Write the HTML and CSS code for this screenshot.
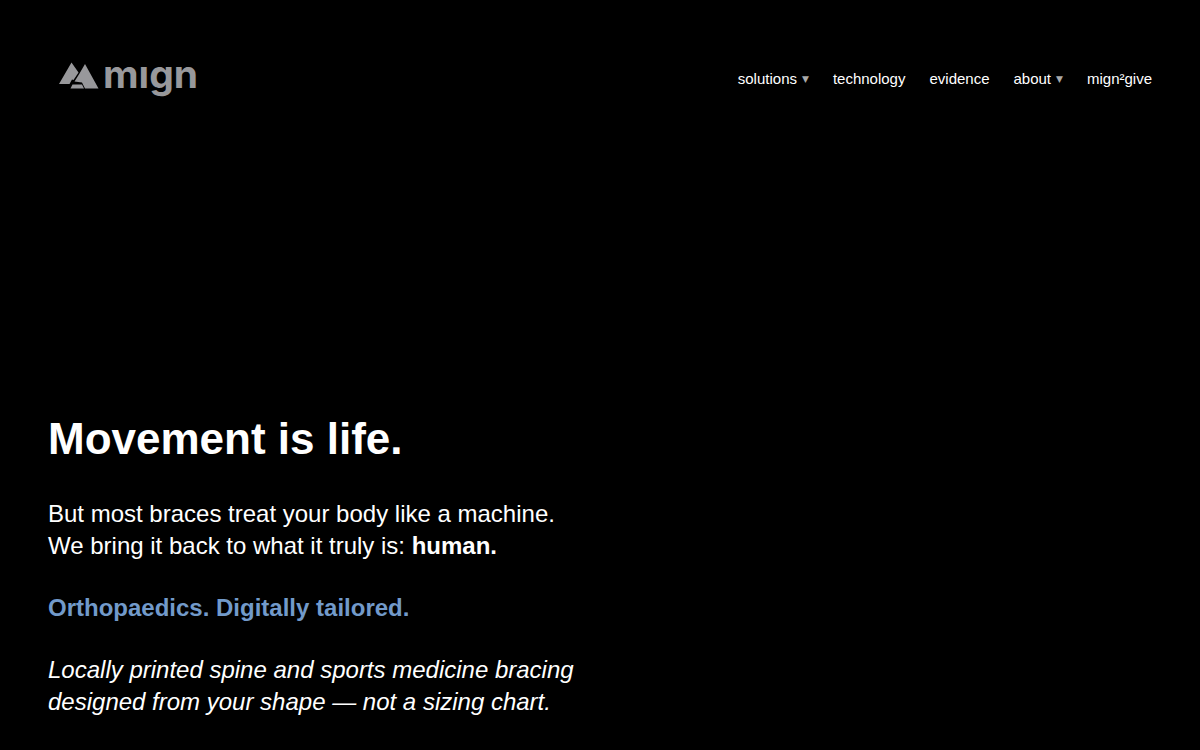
FILE: index.html
```html
<!DOCTYPE html>
<html lang="en">
  <head>
    <meta charset="UTF-8" />
    <meta name="viewport" content="width=device-width, initial-scale=1.0" />
    <title>mign</title>
    <link rel="stylesheet" href="styles.css">
  </head>
  <body>
    <div class="hero">
      <header class="header">
        <a href="#" class="logo">
          <svg class="logo-image" viewBox="0 0 140 40">
            <path d="M12.5 4.5L19.5 14.5L14.5 22L13 21.5L10.5 26H0Z" />
            <path d="M26 6L39.5 30.5H26L23 24.5L15.5 23.5L20.5 15.5Z" />
            <path d="M13.5 26.5H23L25 30.5H11.5Z" />
            <text class="logo-name" x="44" y="30">mıgn</text>
          </svg>
        </a>
        <nav class="nav">
          <a href="#">solutions <span class="caret">▼</span></a>
          <a href="#">technology</a>
          <a href="#">evidence</a>
          <a href="#">about <span class="caret">▼</span></a>
          <a href="#">mign²give</a>
        </nav>
      </header>

      <main class="hero-content">
        <h1>Movement is life.</h1>
        <p>
          But most braces treat your body like a machine.<br />
          We bring it back to what it truly is: <strong>human.</strong>
        </p>
        <p class="tagline">Orthopaedics. Digitally tailored.</p>
        <p class="summary">
          Locally printed spine and sports medicine bracing<br />
          designed from your shape — not a sizing chart.
        </p>
      </main>
    </div>
  </body>
</html>
```
FILE: styles.css
```css
:root {
  --background: #000000;
  --text: #ffffff;
  --accent: #729aca;
  --logo: #98989b;
}

* {
  margin: 0;
  padding: 0;
  box-sizing: border-box;
}

body {
  font-family: "Liberation Sans", Arial, sans-serif;
  color: var(--text);
  background-color: var(--background);
}

.hero {
  min-height: 100vh;
  padding: 48px 48px 32px;
  display: flex;
  flex-direction: column;
  justify-content: space-between;
}

.header {
  min-height: 60px;
  display: flex;
  justify-content: space-between;
  align-items: center;
}

.logo {
  padding-left: 11px;
}

.logo-image {
  display: block;
  width: 140px;
  height: 40px;
  fill: var(--logo);
  overflow: visible;
}

.logo-name {
  font-family: Inter, sans-serif;
  font-size: 39px;
  font-weight: 700;
}

.nav {
  display: flex;
  gap: 24px;
}

.nav a {
  display: flex;
  align-items: center;
  gap: 5px;
  color: var(--text);
  font-size: 15px;
  text-decoration: none;
}

.caret {
  padding-top: 2px;
  font-family: "DejaVu Sans", sans-serif;
  font-size: 9px;
  line-height: 12px;
  color: #aaaaaa;
}

.hero-content {
  font-size: 24px;
  line-height: 32px;
}

h1 {
  margin-bottom: 32px;
  font-size: 44px;
  line-height: 54px;
}

.hero-content p + p {
  margin-top: 30px;
}

.tagline {
  color: var(--accent);
  font-weight: 700;
}

.summary {
  font-style: italic;
}

@media (max-width: 768px) {
  .header {
    flex-direction: column;
    gap: 24px;
  }

  .nav {
    flex-wrap: wrap;
    justify-content: center;
  }
}
```
